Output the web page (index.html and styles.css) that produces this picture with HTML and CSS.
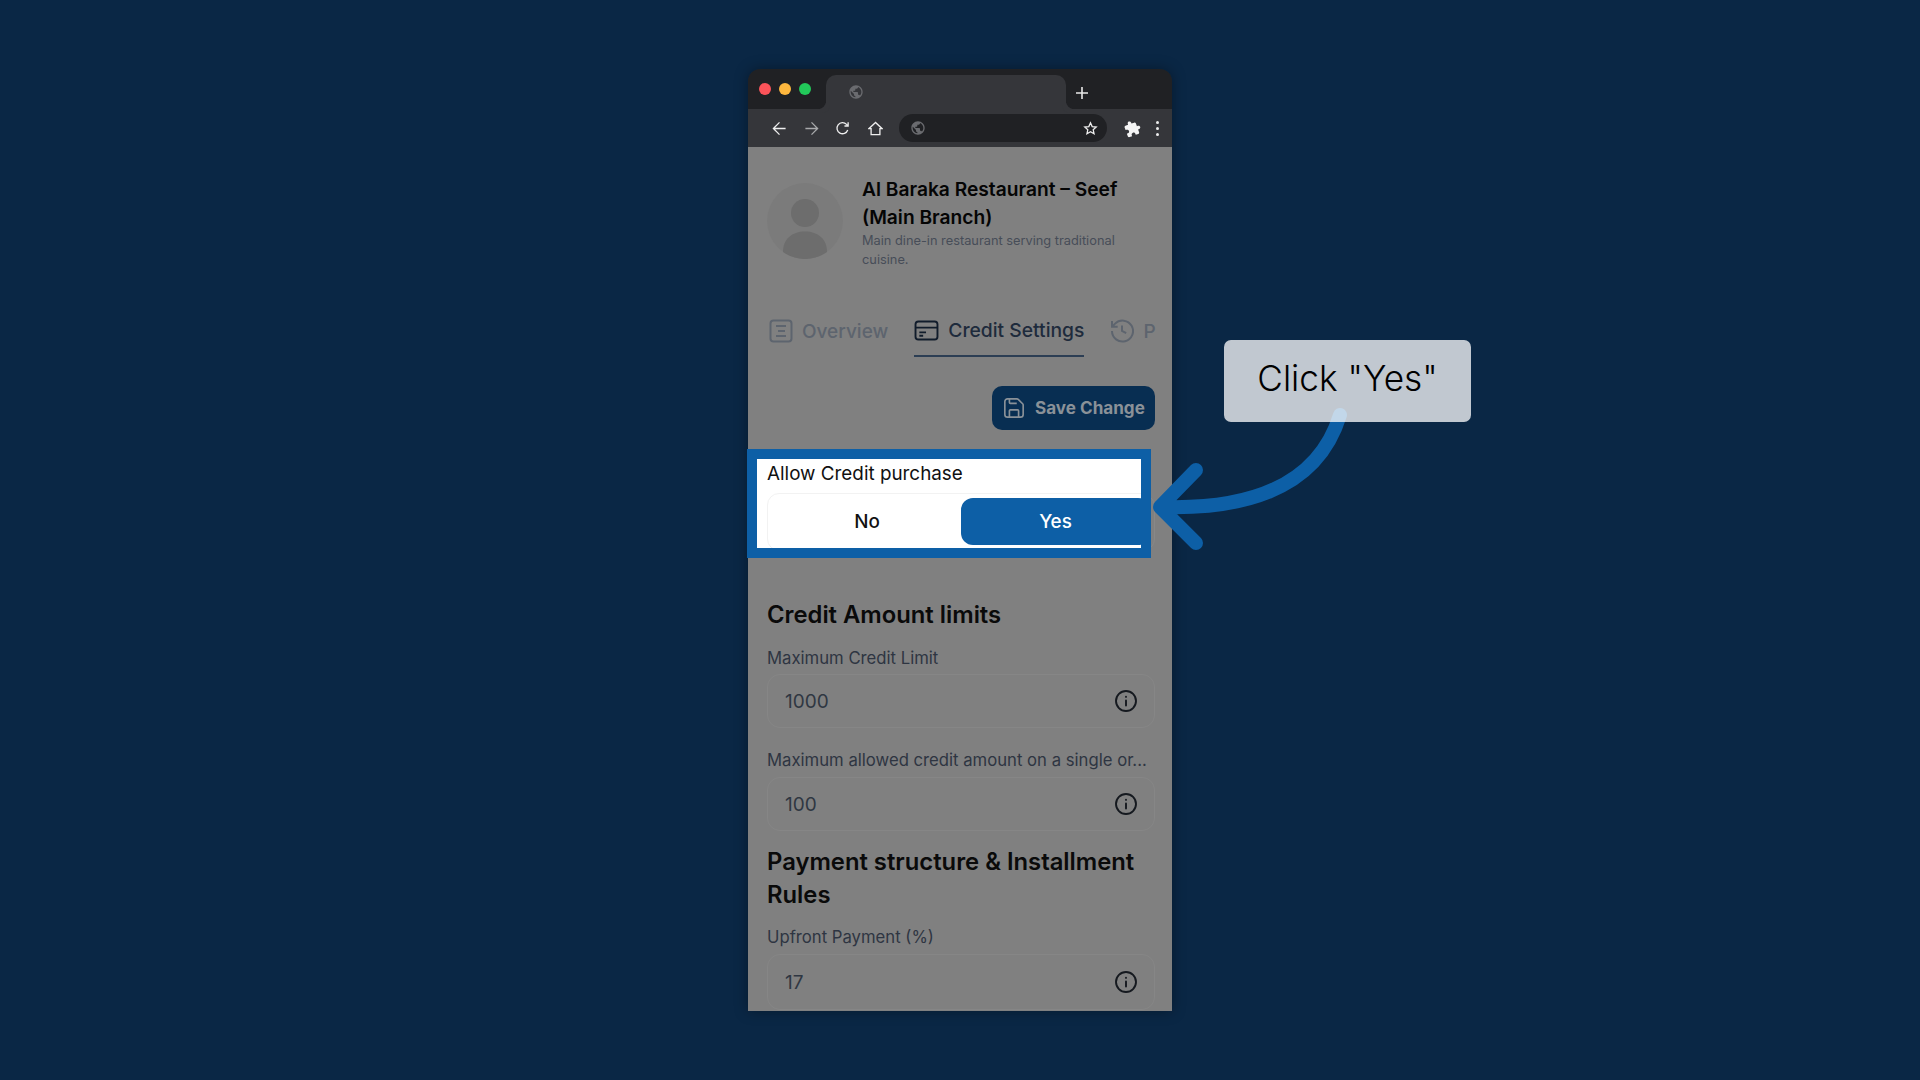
FILE: index.html
```html
<!DOCTYPE html>
<html lang="en">
<head>
<meta charset="utf-8">
<title>Click Yes</title>
<link rel="stylesheet" href="styles.css">
</head>
<body>
<main class="stage">
  <section class="window">
    <div class="tabbar">
      <div class="lights"><span class="light red"></span><span class="light yellow"></span><span class="light green"></span></div>
      <div class="tab">
        <svg class="globe" viewBox="0 0 24 24"><path d="M12 2C6.48 2 2 6.48 2 12s4.48 10 10 10 10-4.48 10-10S17.52 2 12 2zm-1 17.93c-3.95-.49-7-3.85-7-7.93 0-.62.08-1.21.21-1.79L9 15v1c0 1.1.9 2 2 2v1.93zm6.9-2.54c-.26-.81-1-1.39-1.9-1.39h-1v-3c0-.55-.45-1-1-1H8v-2h2c.55 0 1-.45 1-1V7h2c1.1 0 2-.9 2-2v-.41c2.93 1.19 5 4.06 5 7.41 0 2.08-.8 3.97-2.1 5.39z"/></svg>
      </div>
      <svg class="newtab" viewBox="0 0 12 12"><path d="M6 0v12M0 6h12"/></svg>
    </div>
    <div class="toolbar">
      <svg class="tool back" viewBox="0 0 16 16"><path d="M14.5 8H1.5M8 1.5 1.5 8 8 14.5"/></svg>
      <svg class="tool fwd" viewBox="0 0 16 16"><path d="M1.5 8h13M8 1.5 14.5 8 8 14.5"/></svg>
      <svg class="tool reload" viewBox="0 0 16 16"><path d="M13.6 9.6A5.9 5.9 0 1 1 12.3 3.6L14 5.2M14 1.4v3.9h-3.9"/></svg>
      <svg class="tool home" viewBox="0 0 16 16"><path d="M8 1.5.9 8.2h2.4v6.3h9.4V8.2h2.4z"/></svg>
      <div class="omnibox">
        <svg class="globe" viewBox="0 0 24 24"><path d="M12 2C6.48 2 2 6.48 2 12s4.48 10 10 10 10-4.48 10-10S17.52 2 12 2zm-1 17.93c-3.95-.49-7-3.85-7-7.93 0-.62.08-1.21.21-1.79L9 15v1c0 1.1.9 2 2 2v1.93zm6.9-2.54c-.26-.81-1-1.39-1.9-1.39h-1v-3c0-.55-.45-1-1-1H8v-2h2c.55 0 1-.45 1-1V7h2c1.1 0 2-.9 2-2v-.41c2.93 1.19 5 4.06 5 7.41 0 2.08-.8 3.97-2.1 5.39z"/></svg>
        <svg class="star" viewBox="0 0 24 24"><path d="m12 3 2.7 6 6.5.7-4.9 4.3 1.4 6.4-5.7-3.3-5.7 3.3L7.700 14 2.800 9.700 9.300 9z"/></svg>
      </div>
      <svg class="puzzle" viewBox="0 0 24 24"><path d="M20.5 11H19V7c0-1.100-.9-2-2-2h-4V3.500C13 2.120 11.880 1 10.500 1S8 2.120 8 3.500V5H4c-1.100 0-1.990.9-1.990 2v3.800H3.500c1.490 0 2.700 1.210 2.700 2.700s-1.210 2.700-2.700 2.700H2V20c0 1.100.9 2 2 2h3.800v-1.500c0-1.490 1.210-2.700 2.700-2.700 1.490 0 2.700 1.210 2.700 2.700V22H17c1.100 0 2-.9 2-2v-4h1.500c1.380 0 2.500-1.120 2.500-2.500S21.880 11 20.500 11z"/></svg>
      <div class="dots"><span></span><span></span><span></span></div>
    </div>

    <div class="page">
      <header class="profile">
        <svg class="avatar" viewBox="0 0 76 76"><circle class="disc" cx="38" cy="38" r="38"/><circle class="shape" cx="38" cy="30" r="14"/><path class="shape" d="M16 69a38 38 0 0 0 44 0c0-13-9-20.500-22-20.500S16 56 16 69z"/></svg>
        <div class="identity">
          <h1>Al Baraka Restaurant – Seef (Main Branch)</h1>
          <p>Main dine-in restaurant serving traditional cuisine.</p>
        </div>
      </header>

      <nav class="tabs">
        <div class="nav-item muted">
          <svg class="nav-icon" viewBox="0 0 24 24"><rect x="1.500" y="1.500" width="21" height="21" rx="3"/><path d="M7 7h10M9 12h7M7 17h10"/></svg>
          <span>Overview</span>
        </div>
        <div class="nav-item active">
          <svg class="nav-icon card" viewBox="0 0 26 22"><rect x="1.500" y="1.500" width="23" height="19" rx="3"/><path d="M1.500 8h23M5.500 13h7M5.500 16.500h4"/></svg>
          <span>Credit Settings</span>
        </div>
        <div class="nav-item muted">
          <svg class="nav-icon" viewBox="0 0 24 24"><path d="M2 12a10.500 10.500 0 1 0 3.100-7.400L2 7.700M2 2v5.700h5.700M12 6.500V12l4.200 2.200"/></svg>
          <span>P</span>
        </div>
      </nav>

      <div class="actions">
        <button class="save" type="button">
          <svg class="save-icon" viewBox="0 0 24 24"><path d="M15.200 2H5a3 3 0 0 0-3 3v14a3 3 0 0 0 3 3h14a3 3 0 0 0 3-3V8.800a2 2 0 0 0-.6-1.400l-4.800-4.800a2 2 0 0 0-1.400-.6z"/><path d="M17 22v-7a1 1 0 0 0-1-1H8a1 1 0 0 0-1 1v7M7 2v4a1 1 0 0 0 1 1h7"/></svg>
          <span class="save-text">Save Change</span>
        </button>
      </div>

      <div class="toggle-slot"><div class="toggle-outline"></div></div>

      <h2 class="first">Credit Amount limits</h2>
      <label class="field-label">Maximum Credit Limit</label>
      <div class="field"><span>1000</span><svg class="info" viewBox="0 0 24 24"><circle cx="12" cy="12" r="10"/><path d="M12 16.500v-5M12 7.800v.1"/></svg></div>

      <label class="field-label second">Maximum allowed credit amount on a single or...</label>
      <div class="field"><span>100</span><svg class="info" viewBox="0 0 24 24"><circle cx="12" cy="12" r="10"/><path d="M12 16.500v-5M12 7.800v.1"/></svg></div>

      <h2 class="payment">Payment structure &amp; Installment Rules</h2>
      <label class="field-label third">Upfront Payment (%)</label>
      <div class="field last"><span>17</span><svg class="info" viewBox="0 0 24 24"><circle cx="12" cy="12" r="10"/><path d="M12 16.500v-5M12 7.800v.1"/></svg></div>
    </div>

    <div class="highlight">
      <div class="highlight-inner">
        <div class="allow-label">Allow Credit purchase</div>
        <div class="toggle">
          <div class="choice">No</div>
          <div class="choice on">Yes</div>
        </div>
      </div>
    </div>
  </section>

  <svg class="arrow" viewBox="0 0 220 160"><path d="M200 15C180 80 120 110 22 107M56 70 20 107 56 143"/></svg>
  <div class="callout">Click "Yes"</div>
</main>
</body>
</html>
```
FILE: styles.css
```css
* { box-sizing: border-box; }
html, body { margin: 0; height: 100%; }
body { background: #0a2745; font-family: "Inter", "Liberation Sans", sans-serif; overflow: hidden; }
.stage { position: relative; width: 1920px; height: 1080px; display: flex; align-items: center; justify-content: center; }

.window { position: relative; width: 424px; height: 942px; display: flex; flex-direction: column; border-radius: 12px 12px 0 0; box-shadow: 0 0 14px rgba(0, 0, 0, .35); }

.tabbar { height: 40px; flex: none; display: flex; background: #202124; border-radius: 12px 12px 0 0; }
.lights { width: 78px; padding: 14px 0 0 11px; display: flex; gap: 8px; align-items: flex-start; }
.light { width: 12px; height: 12px; border-radius: 50%; }
.red { background: #fb5359; }
.yellow { background: #fdb73e; }
.green { background: #22c95a; }
.tab { position: relative; width: 240px; margin-top: 6px; background: #35363a; border-radius: 10px 10px 0 0; padding: 9px 0 0 22px; }
.tab::before, .tab::after { content: ""; position: absolute; bottom: 0; width: 10px; height: 10px; }
.tab::before { left: -10px; border-bottom-right-radius: 8px; box-shadow: 4px 4px 0 #35363a; }
.tab::after { right: -10px; border-bottom-left-radius: 8px; box-shadow: -4px 4px 0 #35363a; }
.globe { width: 16px; height: 16px; fill: #6a6b6f; display: block; }
.newtab { width: 12px; height: 12px; margin: 18px 0 0 10px; stroke: #e8e8e8; stroke-width: 1.6; fill: none; }

.toolbar { height: 38px; flex: none; background: #35363a; display: flex; align-items: center; padding-left: 24px; }
.tool { width: 15px; height: 15px; fill: none; stroke: #eeeeee; stroke-width: 1.4; }
.fwd { margin-left: 17px; stroke: #a8a9ab; }
.reload { margin-left: 16px; }
.home { margin-left: 18px; }
.omnibox { width: 208px; height: 28px; margin-left: 16px; border-radius: 14px; background: #202124; display: flex; align-items: center; justify-content: space-between; padding: 0 9px 0 11px; }
.star { width: 15px; height: 15px; fill: none; stroke: #eeeeee; stroke-width: 2; }
.puzzle { width: 17px; height: 17px; margin-left: 17px; fill: #f5f5f5; transform: rotate(-20deg); }
.dots { display: flex; flex-direction: column; gap: 3px; margin-left: 15px; }
.dots span { width: 3px; height: 3px; border-radius: 50%; background: #ececec; }

.page { flex: 1; min-height: 0; background: #808080; padding: 0 17px 0 19px; overflow: hidden; }
.profile { display: flex; gap: 19px; padding-top: 36px; }
.avatar { width: 76px; height: 76px; flex: none; }
.disc { fill: #7b7b7b; }
.shape { fill: #6d6d6d; }
.identity { margin-top: -8px; min-width: 0; }
h1 { margin: 0; font-size: 19.200px; line-height: 28px; font-weight: 600; color: #050505; }
.identity p { margin: 0; font-size: 12.800px; line-height: 19px; color: #474d58; }

.tabs { display: flex; gap: 26px; margin-top: 40px; height: 48px; padding-left: 2px; }
.nav-item { display: flex; flex: none; align-items: center; gap: 9px; height: 48px; font-size: 19px; font-weight: 500; padding-bottom: 4px; white-space: nowrap; }
.nav-icon { width: 24px; height: 24px; fill: none; stroke: currentColor; stroke-width: 2; flex: none; }
.nav-icon.card { width: 25px; height: 21px; color: #111c2b; }
.muted { color: #5d646e; }
.active { color: #1e2b3c; font-size: 19.300px; border-bottom: 2px solid #2c3e54; }

.actions { display: flex; justify-content: flex-end; margin-top: 29px; }
.save { height: 44px; width: 163px; border: 0; border-radius: 10px; background: #082e52; color: #8a9198; font: 700 17.100px "Inter", sans-serif; display: flex; align-items: center; gap: 10px; padding: 0 0 0 11px; }
.save-text { margin-bottom: 2px; }
.save-icon { width: 22px; height: 22px; fill: none; stroke: #8a9198; stroke-width: 1.800; flex: none; }

.toggle-slot { height: 120px; padding-top: 64px; }
.toggle-outline { height: 57px; border: 1px solid #888888; border-radius: 12px; }

h2 { margin: 0; font-size: 23.800px; line-height: 33px; font-weight: 600; color: #0a0a0a; }
h2.first { margin-top: 48px; }
.field-label { display: block; margin-top: 15px; font-size: 16.700px; line-height: 24px; color: #2e3542; white-space: nowrap; }
.field-label.second { margin-top: 20px; }
.field-label.third { margin-top: 14px; }
.field { height: 54px; margin-top: 4px; border: 1px solid #868686; border-radius: 13px; display: flex; align-items: center; justify-content: space-between; padding: 0 16px 0 17px; font-size: 19px; color: #2f3742; }
.second + .field { margin-top: 5px; }
.info { width: 24px; height: 24px; fill: none; stroke: #15191f; stroke-width: 1.900; stroke-linecap: round; }
h2.payment { margin-top: 14px; }
.field.last { height: 56px; margin-top: 5px; }

.highlight { position: absolute; left: -1px; top: 380px; width: 404px; height: 109px; border: 10px solid #0d5fa6; background: #fff; }
.highlight-inner { height: 100%; overflow: hidden; padding: 0 0 0 10px; }
.allow-label { height: 30px; font-size: 18.850px; line-height: 29px; color: #111; }
.toggle { width: 388px; height: 58px; margin-top: 4px; padding: 4px 5px; border: 1px solid #f2f2f2; border-radius: 12px; display: grid; grid-template-columns: 188px 189px; }
.choice { height: 47px; display: flex; align-items: center; justify-content: center; font-size: 18.850px; font-weight: 500; color: #111; }
.choice.on { background: #0d5fa6; color: #fff; border-radius: 12px; }

.arrow { position: absolute; left: 1140px; top: 400px; width: 220px; height: 160px; fill: none; stroke: #0d5fa6; stroke-width: 14; stroke-linecap: round; stroke-linejoin: round; }
.callout { position: absolute; left: 1224px; top: 340px; width: 247px; height: 82px; border-radius: 7px; background: rgba(255, 255, 255, .75); color: #000; display: flex; align-items: center; justify-content: center; font-size: 35.200px; font-weight: 300; padding-bottom: 6px; }
```
